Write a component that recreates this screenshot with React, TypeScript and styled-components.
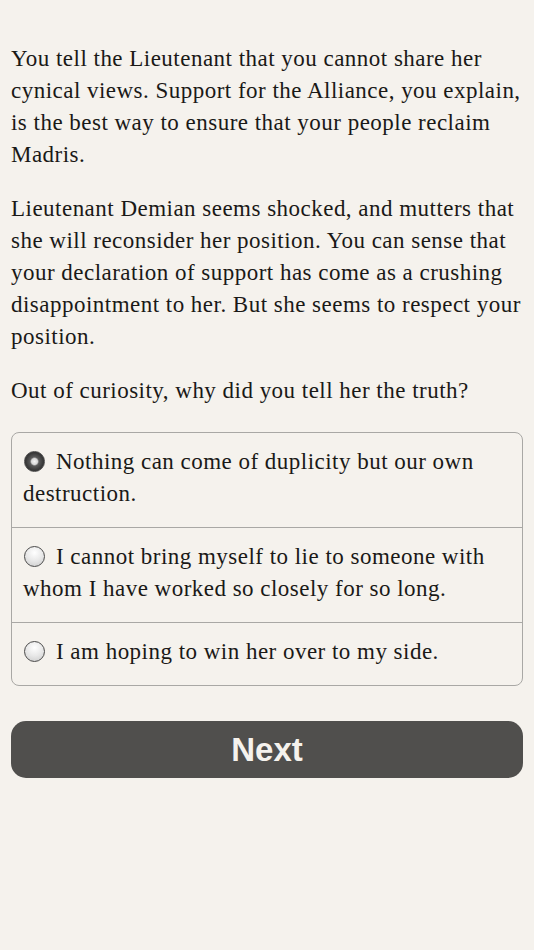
import React, { useState } from "react";
import styled, { createGlobalStyle } from "styled-components";

const Global = createGlobalStyle`
  html, body { margin: 0; padding: 0; background: #f5f2ed; }
  body { font-family: "Liberation Serif", "Times New Roman", serif; color: #1a1917; }
`;

const Page = styled.div`
  padding: 43px 11px 40px 11px;
  display: flex;
  flex-direction: column;
`;

const Para = styled.p`
  margin: 0 0 22px 0;
  font-size: 23px;
  line-height: 32px;
  letter-spacing: 0.48px;
`;

const Options = styled.div`
  margin-top: 3px;
  border: 1px solid #a9a8a5;
  border-radius: 8px;
  display: flex;
  flex-direction: column;
`;

const Option = styled.label<{ $last?: boolean }>`
  display: block;
  padding: 13px 11px 17px 11px;
  font-size: 23px;
  line-height: 32px;
  letter-spacing: 0.48px;
  border-bottom: ${(p) => (p.$last ? "none" : "1px solid #a9a8a5")};
  cursor: pointer;
`;

const Radio = styled.span<{ $checked?: boolean }>`
  display: inline-block;
  width: 21px;
  height: 21px;
  border-radius: 50%;
  box-sizing: border-box;
  margin: 0 11px 0 1px;
  vertical-align: -3px;
  border: 1px solid #4a4a4a;
  background: ${(p) =>
    p.$checked
      ? "radial-gradient(circle at 50% 50%, #f4f4f4 0, #d8d8d8 3px, #5a5a5a 4.5px, #2e2e2e 10px)"
      : "radial-gradient(circle at 50% 30%, #ffffff 0, #e8e8e8 50%, #c9c9c9 100%)"};
`;

const NextButton = styled.button`
  margin-top: 35px;
  height: 57px;
  border: none;
  border-radius: 15px;
  background: #504f4d;
  color: #f5f2ed;
  font-family: "Liberation Sans", Arial, sans-serif;
  font-weight: bold;
  font-size: 33px;
  cursor: pointer;
`;

const choices = [
  "Nothing can come of duplicity but our own destruction.",
  "I cannot bring myself to lie to someone with whom I have worked so closely for so long.",
  "I am hoping to win her over to my side.",
];

export default function App() {
  const [sel, setSel] = useState(0);
  return (
    <>
      <Global />
      <Page>
        <Para>
          You tell the Lieutenant that you cannot share her cynical views. Support for the Alliance, you explain, is the best way to ensure that your people reclaim Madris.
        </Para>
        <Para>
          Lieutenant Demian seems shocked, and mutters that she will reconsider her position. You can sense that your declaration of support has come as a crushing disappointment to her. But she seems to respect your position.
        </Para>
        <Para>Out of curiosity, why did you tell her the truth?</Para>
        <Options>
          {choices.map((c, i) => (
            <Option key={i} $last={i === choices.length - 1} onClick={() => setSel(i)}>
              <Radio $checked={sel === i} />
              {c}
            </Option>
          ))}
        </Options>
        <NextButton>Next</NextButton>
      </Page>
    </>
  );
}
